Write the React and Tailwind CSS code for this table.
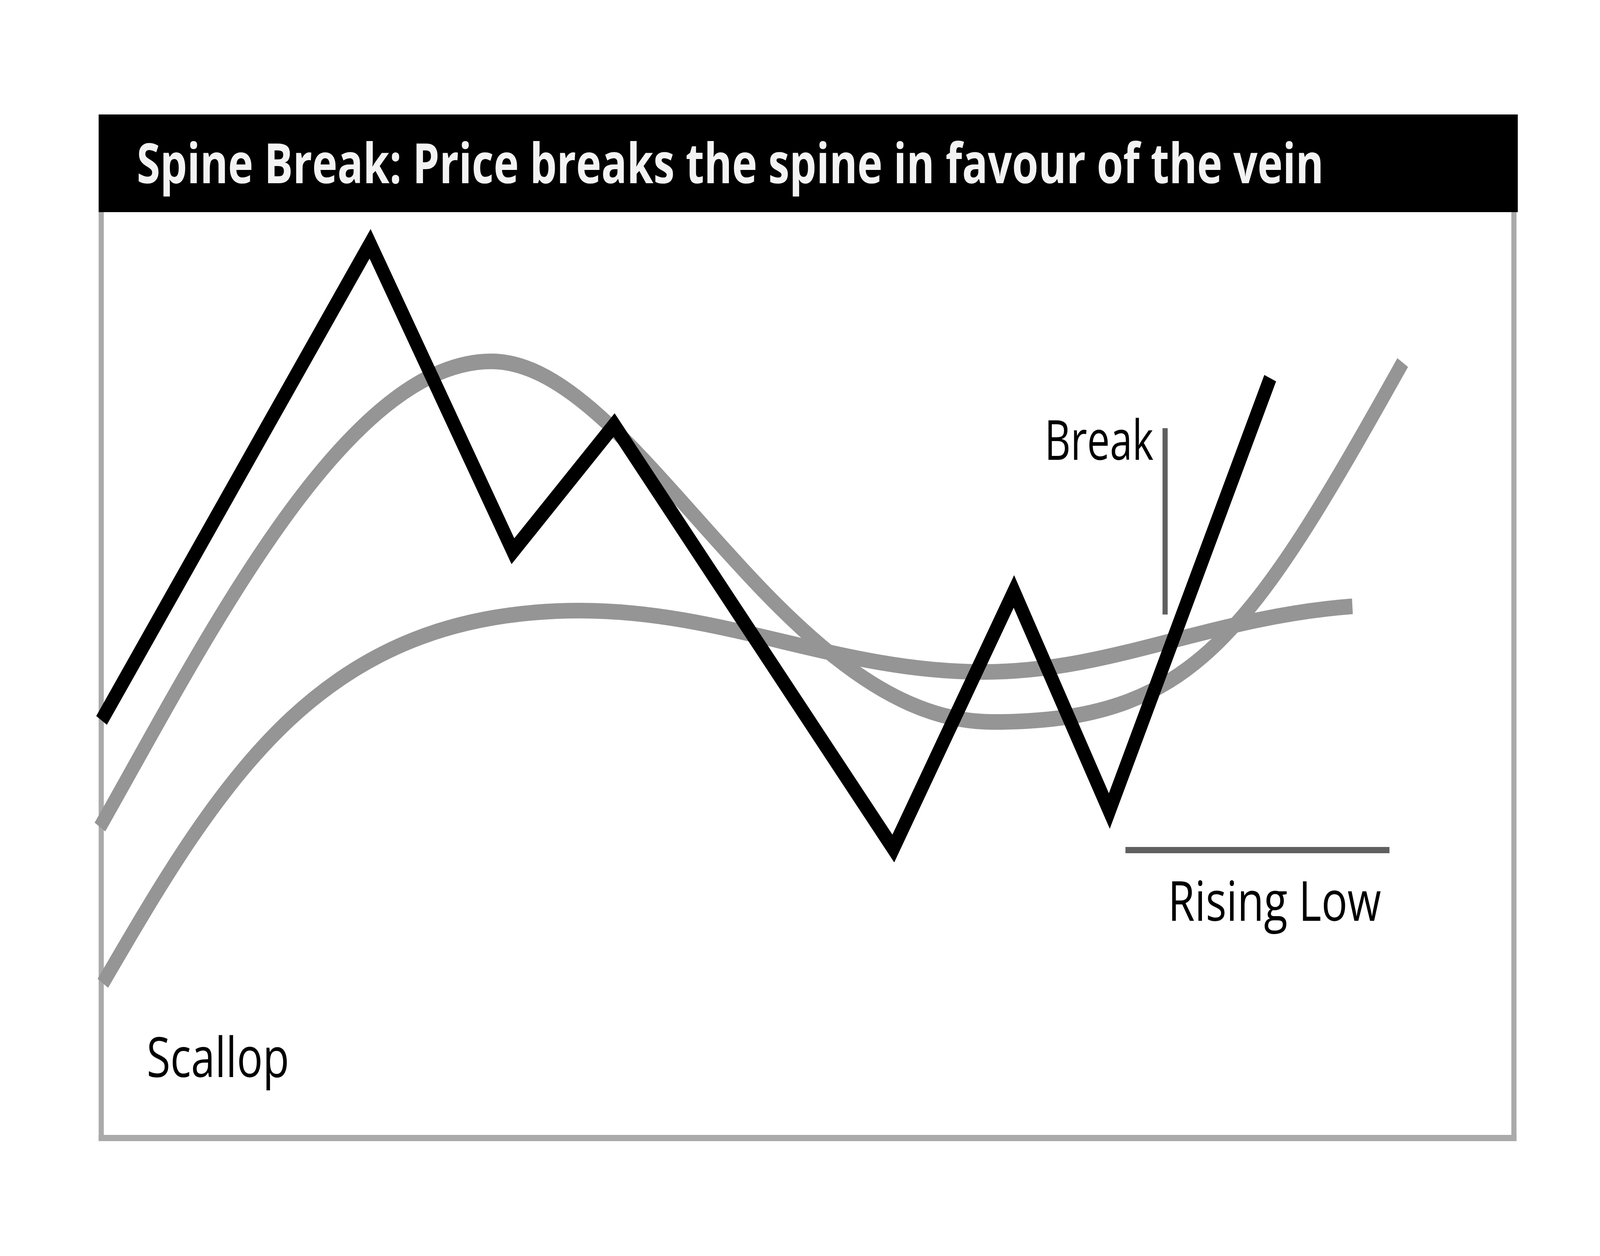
import { useState } from 'react';

// Spine break chart card. Drawn on a 4963x3215 design; the browser
// viewport can be narrower, so the sheet is squeezed to fit its width.
const DESIGN_W = 4963;

const black = [
  [315, 1844], [1148, 624], [1591, 1411], [1905, 1088],
  [2771, 2172], [3145, 1514], [3441, 2076], [3940, 968],
];

// hand-fitted bezier paths (page coordinates)
const scallopPath =
  'M310,2117 C649,1622 1074,925 1524,925 C1974,925 2428,1848 3078,1848 C3700,1848 3874,1632 4351,928';
const spinePath =
  'M319,2517 C693,1986 1000,1563 1800,1563 C2250,1563 2600,1720 3050,1720 C3450,1720 3750,1580 4195,1552';

const Label = ({ x, y, w, children }) => (
  <text x={x} y={y} fontSize="141" fill="#000" textLength={w} lengthAdjust="spacingAndGlyphs">
    {children}
  </text>
);

export default function App() {
  const [sx] = useState(() => Math.min(1, window.innerWidth / DESIGN_W));

  return (
    <div className="w-screen h-screen overflow-hidden bg-white">
      <div
        className="w-[4963px] h-[3215px] origin-top-left pt-[293px] pl-[306px] font-['Open_Sans',sans-serif]"
        style={{ transform: `scaleX(${sx})` }}
      >
        <div className="flex flex-col w-[4398px] h-[2628px]">
          {/* Title bar */}
          <div className="h-[250px] w-[4402px] shrink-0 bg-black flex items-center pl-[118px] pb-[8px]">
            <h1 className="text-[142px] font-bold leading-none text-[#f3f3f3] whitespace-nowrap origin-left scale-x-[0.93]">
              Spine Break: Price breaks the spine in favour of the vein
            </h1>
          </div>

          {/* Chart body */}
          <div className="relative flex-1 border-x-[16px] border-b-[16px] border-[#aaaaaa]">
            <svg className="block w-full h-full overflow-visible" viewBox="322 543 4366 2362">
              <path d={spinePath} fill="none" stroke="#959595" strokeWidth="40" />
              <path d={scallopPath} fill="none" stroke="#959595" strokeWidth="40" />
              <polyline
                points={black.map((p) => p.join(',')).join(' ')}
                fill="none"
                stroke="#000"
                strokeWidth="40"
                strokeLinejoin="miter"
                strokeMiterlimit="10"
              />
              <line x1="3614" y1="1096" x2="3614" y2="1573" stroke="#606060" strokeWidth="16" />
              <line x1="3491" y1="2176" x2="4310" y2="2176" stroke="#606060" strokeWidth="16" />
              <Label x={3240} y={1177} w={338}>Break</Label>
              <Label x={3623} y={2357} w={661}>Rising Low</Label>
              <Label x={455} y={2757} w={442}>Scallop</Label>
            </svg>
          </div>
        </div>
      </div>
    </div>
  );
}
